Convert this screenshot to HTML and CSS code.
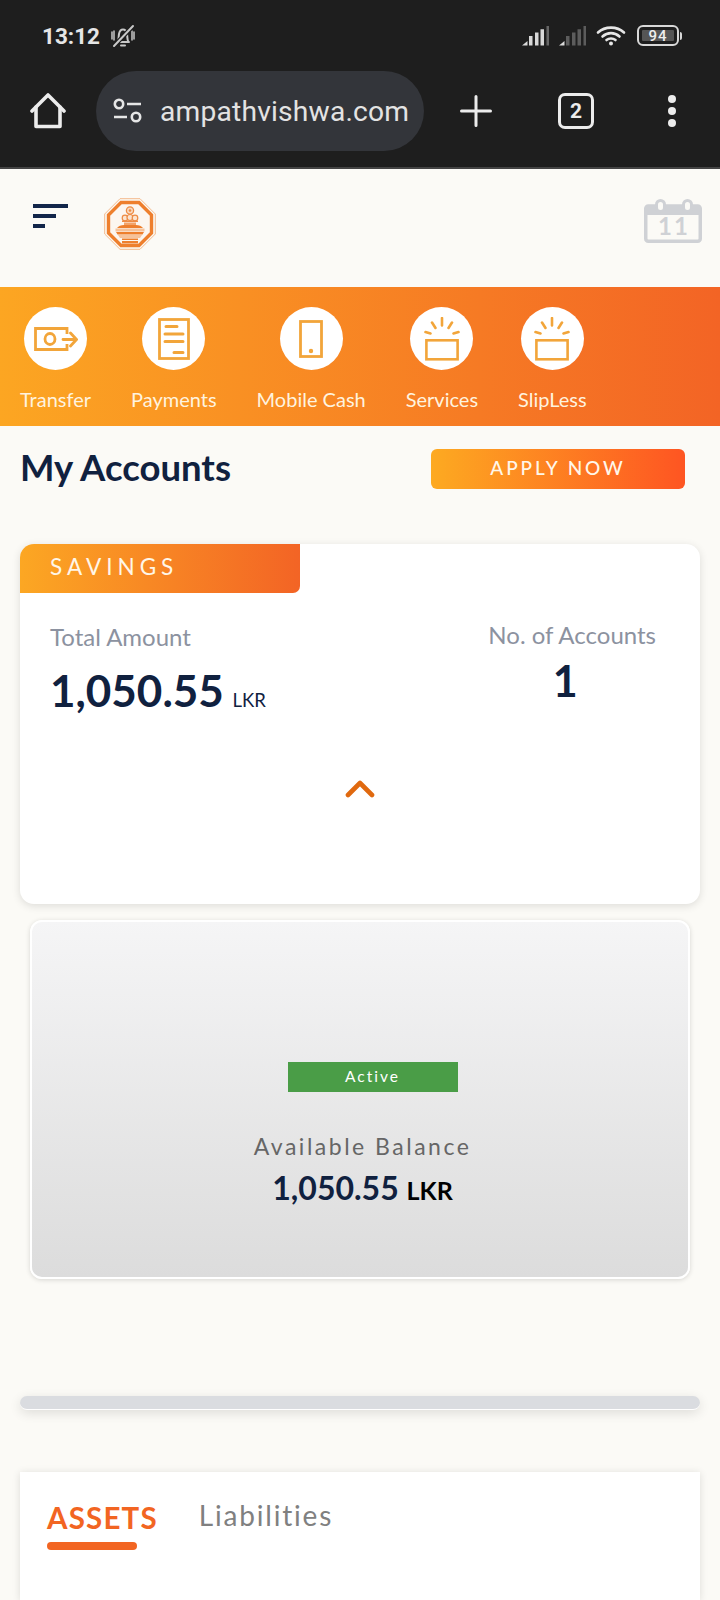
FILE: index.html
```html
<!DOCTYPE html>
<html>
<head>
    <title>My Accounts</title>
    <link rel="stylesheet" href="styles.css">
</head>
<body>
    <header class="chrome">
        <div class="status">
            <div class="status-left">
                <span class="time">13:12</span>
                <svg class="bell" width="24" height="24" viewBox="0 0 24 24" fill="none" stroke="#c8c8c8" stroke-width="2" stroke-linecap="round">
                    <path d="M6 18h12M6.500 18c1.500-2 1-5 1.500-8 .5-2.500 2-4.500 4-4.500s3.500 2 4 4.500c.5 3 0 6 1.500 8"/>
                    <path d="M10 21.500h4"/>
                    <path d="M1 8v7M3 7v9M23 8v7M21 7v9" stroke-width="1.500"/>
                    <path d="M3 22L22 2" stroke="#1e1e1e" stroke-width="4.500"/>
                    <path d="M3 22L22 2"/>
                </svg>
            </div>
            <div class="status-right">
                <svg width="27" height="20" viewBox="0 0 27 20" fill="#d8d8d8">
                    <path d="M0 19.500l5.500-4.500v4.500zM7 10h3.500v9.500H7zM13 6.500h3.500v13H13zM18.500 3.300H22v16.200h-3.500z"/>
                    <path d="M24.500 0H27v19.500h-2.500z" fill="#666"/>
                </svg>
                <svg width="27" height="20" viewBox="0 0 27 20" fill="#5c5c5c">
                    <path d="M0 19.500l5.500-4.500v4.500z" fill="#d8d8d8"/>
                    <path d="M7 10h3.500v9.500H7zM13 6.500h3.500v13H13zM18.500 3.300H22v16.200h-3.500zM24.500 0H27v19.500h-2.500z"/>
                </svg>
                <svg width="30" height="21" viewBox="0 0 30 21" fill="none" stroke="#e6e6e6" stroke-width="2.600" stroke-linecap="round">
                    <path d="M2 7.500c7-6.500 19-6.500 26 0M6.500 11.500c5-4.500 12-4.500 17 0M10.500 15c2.500-2 6.500-2 9 0"/>
                    <circle cx="15" cy="18.500" r="2" fill="#e6e6e6" stroke="none"/>
                </svg>
                <div class="battery">
                    <div class="battery-body"><span class="battery-fill">94</span></div>
                    <span class="battery-tip"></span>
                </div>
            </div>
        </div>
        <div class="toolbar">
            <svg class="home" width="36" height="36" viewBox="0 0 36 36" fill="none" stroke="#ececec" stroke-width="3.600" stroke-linejoin="round" stroke-linecap="round">
                <path d="M2 18L18 2l16 16"/>
                <path d="M6 14v19.500h24V14"/>
            </svg>
            <div class="url-pill">
                <svg width="30" height="26" viewBox="0 0 30 26" fill="none" stroke="#e6e6e6" stroke-width="2.600">
                    <circle cx="6" cy="6" r="4.200"/>
                    <path d="M14 6h14M1 19h13"/>
                    <circle cx="23" cy="19" r="4.200"/>
                </svg>
                <div class="url-text">ampathvishwa.com</div>
            </div>
            <svg class="plus" width="32" height="32" viewBox="0 0 32 32" stroke="#ececec" stroke-width="3" stroke-linecap="round">
                <path d="M16 1.500v29M1.500 16h29"/>
            </svg>
            <div class="tabs-count">2</div>
            <div class="dots"><i></i><i></i><i></i></div>
        </div>
    </header>

    <div class="app-head">
        <div class="app-head-left">
            <div class="hamburger"><i></i><i></i><i></i></div>
            <svg class="logo" width="52" height="52" viewBox="0 0 52 52" fill="none">
                <path d="M16 .7h20L51.300 16v20L36 51.300H16L.7 36V16z" stroke="#f3b98c" stroke-width="1"/>
                <path d="M17 4.500h18L47.500 17v18L35 47.500H17L4.500 35V17z" fill="#fcf6f0" stroke="#ee7f2d" stroke-width="3.400"/>
                <circle cx="26" cy="12.500" r="3.600" fill="#f9d9bf" stroke="#ee8b44" stroke-width="1.300"/>
                <circle cx="26" cy="12.500" r="1.300" fill="#ee8b44"/>
                <circle cx="21" cy="20" r="2.800" fill="#fbe3cf" stroke="#ee8b44" stroke-width="1.200"/>
                <circle cx="26" cy="19.500" r="3" fill="#fbe3cf" stroke="#ee8b44" stroke-width="1.200"/>
                <circle cx="31" cy="20" r="2.800" fill="#fbe3cf" stroke="#ee8b44" stroke-width="1.200"/>
                <rect x="18" y="22.500" width="16" height="1.500" fill="#ee8b44"/>
                <rect x="20" y="24.500" width="12" height="2.500" fill="#f3a268"/>
                <path d="M13 30c1.500-2 4-3 7-3h12c3 0 5.500 1 7 3z" fill="#ee7f2d"/>
                <rect x="11.500" y="30.500" width="29" height="3" fill="#f6c29a"/>
                <path d="M12 34h28l-1.500 2.500h-25z" fill="#ee7f2d"/>
                <path d="M14 37h24l-2 3H16z" fill="#f6c29a"/>
                <rect x="18" y="40.500" width="16" height="1.500" fill="#ee7f2d"/>
                <rect x="18" y="43" width="16" height="2.400" fill="#ee7f2d"/>
            </svg>
        </div>
        <svg class="calendar" width="58" height="44" viewBox="0 0 58 44">
            <rect x="1.750" y="7" width="54.500" height="35.250" rx="2.500" fill="none" stroke="#cfd1d5" stroke-width="3.500"/>
            <path d="M2 7h54v9H2z" fill="#cfd1d5"/>
            <rect x="12.500" y="1.500" width="8" height="11" rx="4" fill="#fbfaf6" stroke="#cfd1d5" stroke-width="3"/>
            <rect x="39.500" y="1.500" width="8" height="11" rx="4" fill="#fbfaf6" stroke="#cfd1d5" stroke-width="3"/>
            <text x="30" y="36" text-anchor="middle" class="calendar-day">11</text>
        </svg>
    </div>

    <nav class="quick-nav">
        <a class="quick-item">
            <span class="quick-icon">
                <svg width="44" height="24" viewBox="0 0 44 24" fill="none" stroke="#f2a53a" stroke-width="2.800">
                    <path d="M33 7V1.500H1.500v21H33V17"/>
                    <ellipse cx="16" cy="12" rx="5" ry="5.500"/>
                    <path d="M29 12.500h13M36.500 6l6 6.500-6 6.500" stroke-linecap="round"/>
                </svg>
            </span>
            <span class="quick-label">Transfer</span>
        </a>
        <a class="quick-item">
            <span class="quick-icon">
                <svg width="32" height="42" viewBox="0 0 32 42" fill="none" stroke="#f2a53a" stroke-width="2.800">
                    <rect x="1.500" y="1.500" width="29" height="39"/>
                    <path d="M8 8.500h11M7 16h18M7 23.500h18M16 34.500h9" stroke-width="3" stroke-linecap="round"/>
                </svg>
            </span>
            <span class="quick-label">Payments</span>
        </a>
        <a class="quick-item">
            <span class="quick-icon">
                <svg width="24" height="38" viewBox="0 0 24 38" fill="none" stroke="#f2a53a" stroke-width="2.800">
                    <rect x="1.500" y="1.500" width="21" height="35"/>
                    <circle cx="12" cy="31" r="2.200" fill="#f2a53a" stroke="none"/>
                </svg>
            </span>
            <span class="quick-label">Mobile Cash</span>
        </a>
        <a class="quick-item">
            <span class="quick-icon">
                <svg width="36" height="44" viewBox="0 0 36 44" fill="none" stroke="#f2a53a" stroke-width="2.600">
                    <rect x="2.400" y="23.300" width="31.200" height="19"/>
                    <path d="M18 1v7.500M8 5.500l3.500 5.500M28 5.500L24.500 11M1.500 15l5 1.500M34.500 15l-5 1.500" stroke-linecap="round"/>
                </svg>
            </span>
            <span class="quick-label">Services</span>
        </a>
        <a class="quick-item">
            <span class="quick-icon">
                <svg width="36" height="44" viewBox="0 0 36 44" fill="none" stroke="#f2a53a" stroke-width="2.600">
                    <rect x="2.400" y="23.300" width="31.200" height="19"/>
                    <path d="M18 1v7.500M8 5.500l3.500 5.500M28 5.500L24.500 11M1.500 15l5 1.500M34.500 15l-5 1.500" stroke-linecap="round"/>
                </svg>
            </span>
            <span class="quick-label">SlipLess</span>
        </a>
    </nav>

    <main>
        <div class="title-row">
            <h1>My Accounts</h1>
            <button class="apply-btn">APPLY NOW</button>
        </div>

        <section class="card savings">
            <div class="savings-tab">SAVINGS</div>
            <div class="savings-row">
                <div>
                    <div class="muted">Total Amount</div>
                    <div class="total">1,050.55 <small>LKR</small></div>
                </div>
                <div class="count-box">
                    <div class="muted">No. of Accounts</div>
                    <div class="count">1</div>
                </div>
            </div>
            <svg class="chevron" width="30" height="18" viewBox="0 0 30 18" fill="none" stroke="#e0690f" stroke-width="4.600" stroke-linecap="round" stroke-linejoin="round">
                <path d="M3 15L15 3l12 12"/>
            </svg>
        </section>

        <section class="account-card">
            <div class="status-badge">Active</div>
            <div class="avail-label">Available Balance</div>
            <div class="avail-amount">1,050.55 <small>LKR</small></div>
        </section>

        <div class="progress-bar"></div>

        <section class="assets-card">
            <div class="tab tab-active">ASSETS</div>
            <div class="tab tab-plain">Liabilities</div>
        </section>
    </main>
</body>
</html>
```

FILE: styles.css
```css
body {
    margin: 0;
    height: 1600px;
    overflow: hidden;
    background-color: #fbfaf6;
    font-family: Lato, sans-serif;
}

/* browser chrome */
.chrome {
    height: 167px;
    background-color: #1e1e1e;
    border-bottom: 2px solid #444;
}
.status {
    height: 71px;
    padding: 0 38px 0 42px;
    display: flex;
    justify-content: space-between;
    align-items: center;
    font-family: Roboto, sans-serif;
}
.status-left {
    display: flex;
    align-items: center;
    gap: 11px;
}
.time {
    color: #e6e6e6;
    font-size: 22.500px;
    font-weight: 700;
}
.status-right {
    display: flex;
    align-items: center;
    gap: 10px;
}
.battery {
    display: flex;
    align-items: center;
    gap: 1px;
    margin-left: 1px;
}
.battery-body {
    box-sizing: border-box;
    width: 42px;
    height: 21px;
    padding: 3px;
    border: 2px solid #d8d8d8;
    border-radius: 6px;
}
.battery-fill {
    display: block;
    height: 100%;
    background-color: #555;
    border-radius: 1px;
    color: #eee;
    font-size: 15px;
    font-weight: 500;
    line-height: 13px;
    text-align: center;
    letter-spacing: 1px;
}
.battery-tip {
    width: 2px;
    height: 8px;
    background-color: #d8d8d8;
    border-radius: 0 2px 2px 0;
}
.toolbar {
    height: 80px;
    padding: 0 0 0 30px;
    display: flex;
    align-items: center;
}
.url-pill {
    width: 328px;
    height: 80px;
    margin-left: 30px;
    border-radius: 40px;
    background-color: #33353a;
    display: flex;
    align-items: center;
    box-sizing: border-box;
    padding-left: 17px;
    flex-shrink: 0;
}
.url-text {
    width: 248px;
    margin-left: 17px;
    text-align: right;
    white-space: nowrap;
    color: #e3e3e3;
    font-family: Roboto, sans-serif;
    font-size: 28.200px;
    letter-spacing: 0.2px;
}
.plus {
    margin-left: 36px;
    flex-shrink: 0;
}
.tabs-count {
    flex-shrink: 0;
    width: 30px;
    height: 30px;
    margin-left: 66px;
    border: 3px solid #ececec;
    border-radius: 7px;
    color: #ececec;
    font-family: Roboto, sans-serif;
    font-size: 21px;
    font-weight: 700;
    line-height: 30px;
    text-align: center;
}
.dots {
    margin-left: 74px;
    display: flex;
    flex-direction: column;
    gap: 4px;
}
.dots i {
    width: 8px;
    height: 8px;
    border-radius: 50%;
    background-color: #ececec;
}

/* app header */
.app-head {
    height: 118px;
    padding: 0 18px 0 33px;
    display: flex;
    justify-content: space-between;
    align-items: flex-start;
}
.app-head-left {
    display: flex;
    align-items: flex-start;
}
.hamburger {
    margin-top: 35px;
    display: flex;
    flex-direction: column;
    gap: 6px;
}
.hamburger i {
    display: block;
    width: 35px;
    height: 4px;
    background-color: #12264a;
}
.hamburger i:nth-child(2) {
    width: 23px;
}
.hamburger i:nth-child(3) {
    width: 12px;
}
.logo {
    margin: 29px 0 0 36px;
}
.calendar {
    margin-top: 30px;
}
.calendar-day {
    fill: #cfd1d5;
    font-family: Lato, sans-serif;
    font-size: 24px;
    font-weight: 700;
    letter-spacing: 2px;
}

/* orange shortcut band */
.quick-nav {
    height: 139px;
    padding-left: 20px;
    display: flex;
    gap: 40px;
    background: linear-gradient(90deg, #fca622, #f36425);
}
.quick-item {
    padding-top: 20px;
    display: flex;
    flex-direction: column;
    align-items: center;
}
.quick-icon {
    width: 63px;
    height: 63px;
    border-radius: 50%;
    background-color: #fff;
    display: flex;
    align-items: center;
    justify-content: center;
}
.quick-label {
    margin-top: 17px;
    color: #fff3df;
    font-size: 20px;
    line-height: 24px;
    white-space: nowrap;
}

/* main column */
main {
    padding: 0 20px;
}
.title-row {
    height: 118px;
    display: flex;
    justify-content: space-between;
    align-items: flex-start;
}
h1 {
    margin: 20px 0 0;
    color: #10213f;
    font-size: 36.500px;
    font-weight: 700;
    line-height: 42px;
}
.apply-btn {
    width: 254px;
    height: 40px;
    margin: 23px 15px 0 0;
    padding: 0 0 3px;
    border: 0;
    border-radius: 6px;
    background: linear-gradient(90deg, #fdaa21, #fe5522);
    color: #fff7ea;
    font-family: Lato, sans-serif;
    font-size: 19px;
    font-weight: 500;
    letter-spacing: 2.900px;
}
.card {
    height: 360px;
    border-radius: 14px;
    background-color: #fff;
    box-shadow: 0 2px 8px rgba(0, 0, 0, 0.12);
}
.savings-tab {
    width: 250px;
    height: 49px;
    padding-left: 30px;
    border-radius: 14px 0 7px 0;
    background: linear-gradient(90deg, #fca723, #f36425);
    color: #fff6e8;
    font-size: 22.500px;
    letter-spacing: 5px;
    line-height: 46px;
}
.savings-row {
    padding: 29px 44px 0 30px;
    display: flex;
    justify-content: space-between;
}
.muted {
    color: #8c92a0;
    font-size: 24px;
    line-height: 30px;
}
.total {
    margin-top: 10px;
    color: #10213f;
    font-size: 44px;
    font-weight: 700;
    line-height: 56px;
}
.total small {
    margin-left: -2px;
    font-size: 18.500px;
    font-weight: 400;
}
.count-box {
    margin-top: -2px;
    text-align: center;
}
.count {
    margin-top: 6px;
    padding-right: 14px;
    color: #10213f;
    font-size: 43px;
    font-weight: 700;
    line-height: 50px;
}
.chevron {
    display: block;
    margin: 52px auto 0;
}
.account-card {
    box-sizing: border-box;
    width: 660px;
    height: 359px;
    margin: 16px 0 0 10px;
    padding: 140px 0 0 5px;
    border: 2px solid #fff;
    border-radius: 12px;
    background: linear-gradient(180deg, #f5f5f6, #dcdcdc);
    box-shadow: 0 1px 5px rgba(0, 0, 0, 0.15);
    text-align: center;
}
.status-badge {
    width: 170px;
    height: 30px;
    margin: 0 auto;
    transform: translateX(10px);
    background-color: #4a9d47;
    color: #fff;
    font-size: 15.500px;
    line-height: 28px;
    letter-spacing: 2px;
}
.avail-label {
    margin-top: 40px;
    color: #666;
    font-size: 23px;
    line-height: 28px;
    letter-spacing: 2.500px;
}
.avail-amount {
    margin-top: 7px;
    color: #10213f;
    font-size: 32px;
    font-weight: 700;
    line-height: 42px;
}
.avail-amount small {
    color: #000;
    font-size: 25px;
    font-weight: 700;
}
.progress-bar {
    height: 13px;
    margin-top: 117px;
    border-radius: 7px;
    border-bottom: 1px solid #fff;
    background-color: #dadce0;
    box-shadow: 0 3px 12px rgba(0, 0, 0, 0.12);
}
.assets-card {
    box-sizing: border-box;
    height: 128px;
    margin-top: 62px;
    padding: 29px 0 0 27px;
    display: flex;
    gap: 41px;
    background-color: #fff;
    box-shadow: 0 1px 8px rgba(0, 0, 0, 0.12);
}
.tab {
    color: #808080;
    font-size: 28px;
    line-height: 34px;
    letter-spacing: 1.800px;
}
.tab-plain {
    margin-top: -3px;
}
.tab-active {
    position: relative;
    color: #f26522;
    font-size: 29.500px;
    font-weight: 700;
    letter-spacing: 1.200px;
}
.tab-active::after {
    content: "";
    position: absolute;
    left: 0;
    top: 41px;
    width: 90px;
    height: 8px;
    border-radius: 4px;
    background-color: #f26522;
}
```
